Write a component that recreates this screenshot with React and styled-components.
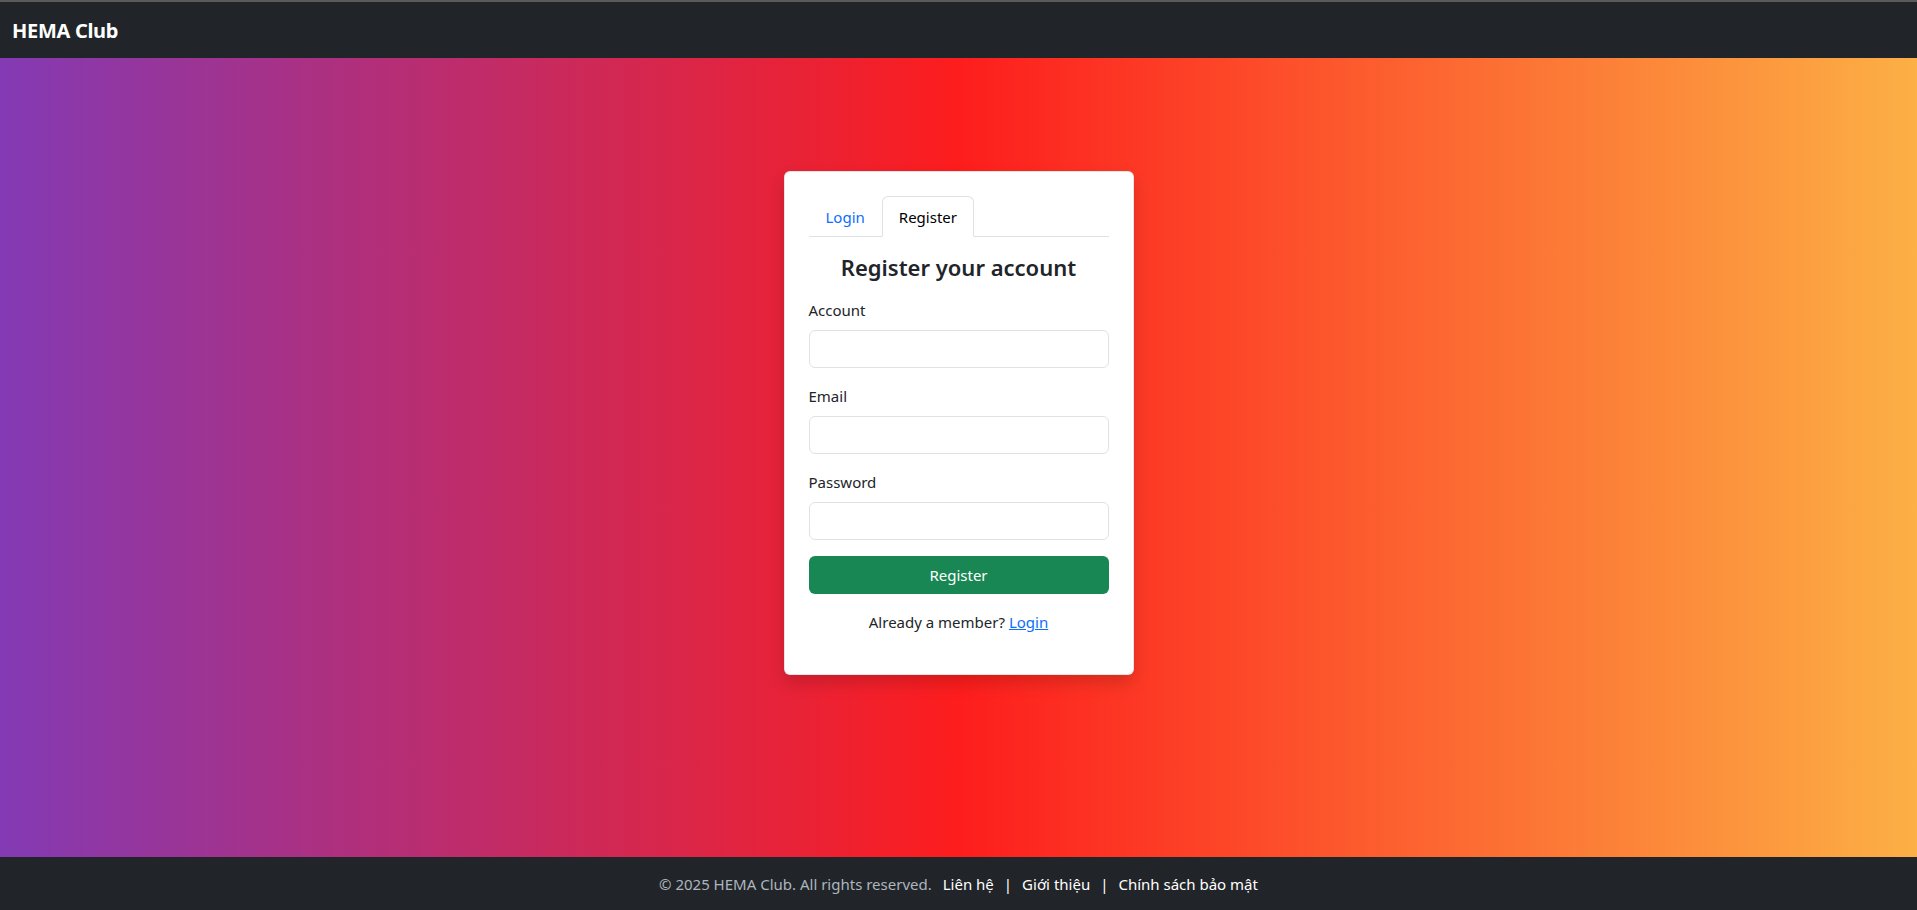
import React, { useState } from 'react';
import styled, { createGlobalStyle } from 'styled-components';

const GlobalStyle = createGlobalStyle`
  * { box-sizing: border-box; }
  html, body {
    margin: 0;
    padding: 0;
  }
  body {
    font-family: "Noto Sans", "Open Sans", Arial, sans-serif;
    font-size: 15px;
    line-height: 24px;
    color: #212529;
  }
`;

const Page = styled.div`
  min-height: 100vh;
  display: flex;
  flex-direction: column;
  border-top: 2px solid #5b5b5b;
`;

const Navbar = styled.nav`
  height: 56px;
  background-color: #212529;
  display: flex;
  align-items: center;
  padding: 0 12px;
`;

const Brand = styled.a`
  color: #fff;
  font-size: 20px;
  font-weight: 700;
  text-decoration: none;
  letter-spacing: -0.3px;
  margin-top: 2px;
`;

const Main = styled.main`
  flex: 1;
  background: linear-gradient(to right, #833ab4, #fd1d1d, #fcb045);
  display: flex;
  justify-content: center;
  align-items: flex-start;
  padding-top: 113px;
`;

const Card = styled.div`
  width: 350px;
  background: #fff;
  border-radius: 6px;
  padding: 24px;
  border: 1px solid rgba(0, 0, 0, 0.1);
  box-shadow: 0 8px 16px rgba(0, 0, 0, 0.15);
`;

const Tabs = styled.ul`
  list-style: none;
  margin: 0 0 16px;
  padding: 0;
  display: flex;
  border-bottom: 1px solid #dee2e6;
`;

const Tab = styled.li`
  margin-bottom: -1px;
`;

const TabButton = styled.button`
  font: inherit;
  height: 41px;
  padding: 0 16px;
  cursor: pointer;
  background: ${p => (p.$active ? '#fff' : 'transparent')};
  color: ${p => (p.$active ? '#000' : '#0d6efd')};
  border: 1px solid ${p => (p.$active ? '#dee2e6' : 'transparent')};
  border-bottom-color: ${p => (p.$active ? '#fff' : 'transparent')};
  border-radius: 6px 6px 0 0;
`;

const Heading = styled.h4`
  margin: 0 0 16px;
  text-align: center;
  font-size: 22px;
  font-weight: 600;
  line-height: 29px;
  color: #212529;
`;

const Field = styled.div`
  margin-bottom: 16px;
`;

const Label = styled.label`
  display: block;
  margin-bottom: 8px;
`;

const Input = styled.input`
  display: block;
  width: 100%;
  height: 38px;
  padding: 6px 12px;
  font: inherit;
  border: 1px solid #dee2e6;
  border-radius: 6px;
  outline: none;
`;

const Button = styled.button`
  display: block;
  width: 100%;
  height: 38px;
  font: inherit;
  color: #fff;
  background-color: #198754;
  border: none;
  border-radius: 6px;
  cursor: pointer;
`;

const Note = styled.p`
  text-align: center;
  margin: 16px 0 16px;
`;

const Link = styled.a`
  color: #0d6efd;
  text-decoration: underline;
`;

const Footer = styled.footer`
  height: 53px;
  background-color: #212529;
  display: flex;
  align-items: center;
  justify-content: center;
  color: #adb5bd;
`;

const FooterLink = styled.a`
  color: #fff;
  text-decoration: none;
  margin-left: ${p => (p.$first ? '11px' : '0')};
`;

const Sep = styled.span`
  color: #fff;
  margin: 0 10px;
`;

export default function App() {
  const [tab, setTab] = useState('register');

  return (
    <Page>
      <GlobalStyle />
      <Navbar>
        <Brand href="#">HEMA Club</Brand>
      </Navbar>
      <Main>
        <Card>
          <Tabs>
            <Tab>
              <TabButton $active={tab === 'login'} onClick={() => setTab('login')}>Login</TabButton>
            </Tab>
            <Tab>
              <TabButton $active={tab === 'register'} onClick={() => setTab('register')}>Register</TabButton>
            </Tab>
          </Tabs>
          <Heading>Register your account</Heading>
          <Field>
            <Label>Account</Label>
            <Input type="text" />
          </Field>
          <Field>
            <Label>Email</Label>
            <Input type="email" />
          </Field>
          <Field>
            <Label>Password</Label>
            <Input type="password" />
          </Field>
          <Button type="button">Register</Button>
          <Note>
            Already a member? <Link href="#">Login</Link>
          </Note>
        </Card>
      </Main>
      <Footer>
        <span>© 2025 HEMA Club. All rights reserved.</span>
        <FooterLink href="#" $first>Liên hệ</FooterLink>
        <Sep>|</Sep>
        <FooterLink href="#">Giới thiệu</FooterLink>
        <Sep>|</Sep>
        <FooterLink href="#">Chính sách bảo mật</FooterLink>
      </Footer>
    </Page>
  );
}
